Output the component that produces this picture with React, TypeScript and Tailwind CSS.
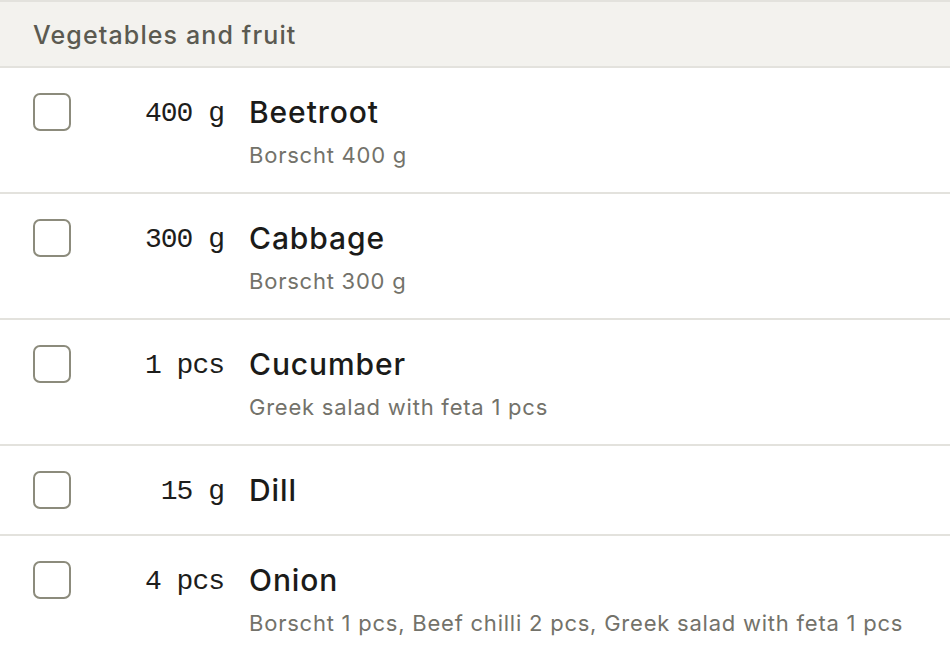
const items = [
  { qty: '400 g', name: 'Beetroot', note: 'Borscht 400 g' },
  { qty: '300 g', name: 'Cabbage', note: 'Borscht 300 g' },
  { qty: '1 pcs', name: 'Cucumber', note: 'Greek salad with feta 1 pcs' },
  { qty: '15 g', name: 'Dill', note: '' },
  { qty: '4 pcs', name: 'Onion', note: 'Borscht 1 pcs, Beef chilli 2 pcs, Greek salad with feta 1 pcs' },
]

export default function App() {
  return (
    <div className="w-[950px] h-[655px] overflow-hidden bg-white font-['Inter',sans-serif]">
      <section className="border-t-2 border-[#e3e2dd]">
        <div className="flex h-[66px] items-center border-b-2 border-[#e3e2dd] bg-[#f3f2ee] px-[33px] pt-[3px]">
          <h2 className="text-[25px] font-medium tracking-[0.045em] text-[#5b5a51]">Vegetables and fruit</h2>
        </div>

        <ul>
          {items.map((item) => (
            <li key={item.name} className="flex border-b-2 border-[#e3e2dd] px-[33px] py-[25px]">
              <input
                type="checkbox"
                className="size-[38px] shrink-0 appearance-none rounded-[7px] border-2 border-[#8c8b7c] bg-white"
              />
              <div className="flex h-[38px] w-[153px] shrink-0 items-center justify-end pt-[3px]">
                <span className="font-['Liberation_Mono',monospace] text-[28px] tracking-[-1px] text-[#1d1d1b]">{item.qty}</span>
              </div>
              <div className="ml-[25px] flex flex-col">
                <div className="flex h-[38px] items-center">
                  <span className="text-[30px] font-medium tracking-[0.03em] text-[#1b1b19]">{item.name}</span>
                </div>
                {item.note && (
                  <p className="mt-[13px] text-[22px] leading-[23px] tracking-[0.035em] text-[#73726a]">{item.note}</p>
                )}
              </div>
            </li>
          ))}
        </ul>
      </section>
    </div>
  )
}
